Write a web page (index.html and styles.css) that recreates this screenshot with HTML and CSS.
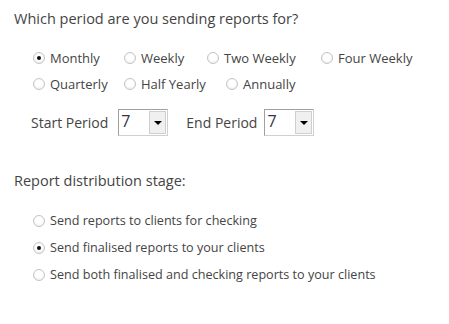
FILE: index.html
```html
<!DOCTYPE html>
<html lang="en">
<head>
  <meta charset="utf-8">
  <title>Report settings</title>
  <link rel="stylesheet" href="styles.css">
</head>
<body>
  <div id="container">
    <div class="question">Which period are you sending reports for?</div>

    <div class="options">
      <div class="row">
        <label class="opt w-monthly"><span class="radio checked"></span>Monthly</label>
        <label class="opt w-weekly"><span class="radio"></span>Weekly</label>
        <label class="opt w-two"><span class="radio"></span>Two Weekly</label>
        <label class="opt"><span class="radio"></span>Four Weekly</label>
      </div>
      <div class="row">
        <label class="opt w-monthly"><span class="radio"></span>Quarterly</label>
        <label class="opt w-half"><span class="radio"></span>Half Yearly</label>
        <label class="opt"><span class="radio"></span>Annually</label>
      </div>
    </div>

    <div class="periods">
      <span class="plabel">Start Period</span>
      <span class="select"><span class="value">7</span><span class="btn"><span class="arrow"></span></span></span>
      <span class="plabel end">End Period</span>
      <span class="select"><span class="value">7</span><span class="btn"><span class="arrow"></span></span></span>
    </div>

    <div class="question stage">Report distribution stage:</div>

    <div class="stages">
      <label class="opt"><span class="radio"></span>Send reports to clients for checking</label>
      <label class="opt"><span class="radio checked"></span>Send finalised reports to your clients</label>
      <label class="opt"><span class="radio"></span>Send both finalised and checking reports to your clients</label>
    </div>
  </div>
</body>
</html>
```

FILE: styles.css
```css
body {
  margin: 0;
  background-color: white;
  color: #444444;
  font-family: "Open Sans", "Noto Sans", sans-serif;
  font-size: 13px;
}

#container {
  padding: 9px 0 0 14px;
}

.question {
  font-size: 14.5px;
  line-height: 20px;
}

.options {
  margin-top: 16px;
  padding-left: 19px;
}

.row {
  display: flex;
  height: 26px;
  align-items: center;
}

.opt {
  display: flex;
  align-items: center;
}

.w-monthly { width: 91px; }
.w-weekly { width: 83px; }
.w-two { width: 114px; }
.w-half { width: 102px; }

.radio {
  box-sizing: border-box;
  width: 12px;
  height: 12px;
  margin-right: 5px;
  border: 1px solid #c4c4c4;
  border-radius: 50%;
  background: radial-gradient(circle at 50% 40%, #ffffff 40%, #e8e8e8 100%);
  position: relative;
}

.radio.checked::after {
  content: "";
  position: absolute;
  left: 3px;
  top: 3px;
  width: 4px;
  height: 4px;
  border-radius: 50%;
  background-color: #111111;
}

.periods {
  display: flex;
  align-items: center;
  margin-top: 12px;
  padding-left: 17px;
  font-size: 14px;
}

.plabel {
  margin-right: 10px;
}

.plabel.end {
  margin-left: 18px;
  margin-right: 7px;
}

.select {
  box-sizing: border-box;
  display: flex;
  width: 50px;
  height: 27px;
  border: 1px solid #a0a0a0;
  border-right-color: #d0d0d0;
  border-bottom-color: #d0d0d0;
  background-color: white;
}

.value {
  flex: 1;
  padding-left: 2px;
  font-size: 16px;
  line-height: 22px;
  color: #333344;
}

.btn {
  box-sizing: border-box;
  width: 17px;
  margin: 1px;
  border: 1px solid #cfcfcf;
  background-color: #f0f0f0;
  display: flex;
  align-items: center;
  justify-content: center;
}

.arrow {
  width: 0;
  height: 0;
  border-left: 4px solid transparent;
  border-right: 4px solid transparent;
  border-top: 4px solid #000000;
}

.stage {
  margin-top: 35px;
}

.stages {
  margin-top: 16px;
  padding-left: 19px;
  font-size: 12.6px;
}

.stages .opt {
  height: 27px;
}
```
